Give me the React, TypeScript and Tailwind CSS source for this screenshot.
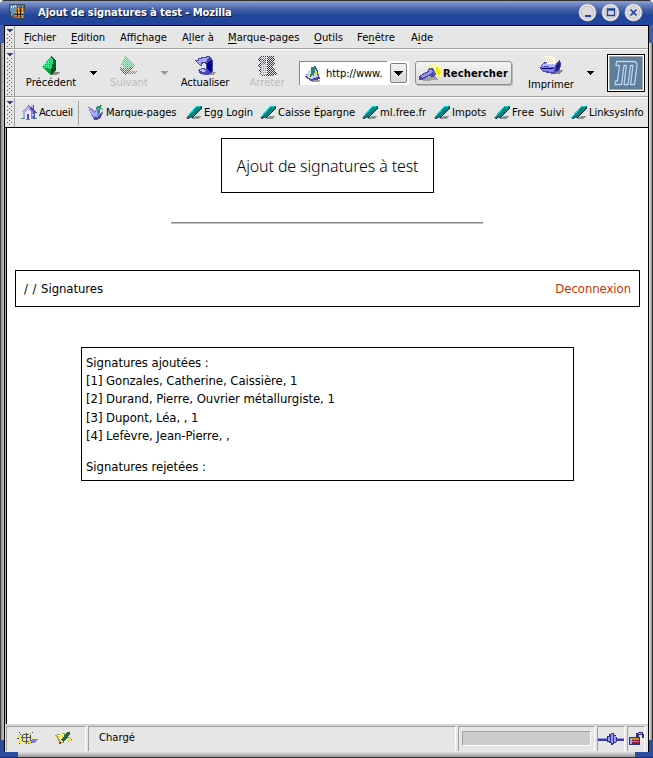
import React from "react";

function Gem() {
  return (
    <svg className="h-5 w-5 shrink-0" viewBox="0 0 20 20" shapeRendering="crispEdges">
      <defs>
        <pattern id="gemDither" width="2" height="2" patternUnits="userSpaceOnUse">
          <rect width="1" height="1" fill="#10a868" />
          <rect x="1" y="1" width="1" height="1" fill="#80ffb8" />
        </pattern>
      </defs>
      <path d="M8 16h11v1h-1v1h-2v1h-7z" fill="#888" />
      <path d="M10 0L1 11L10 13Z" fill="#28e078" />
      <path d="M9 2L2 11L9 12Z" fill="url(#gemDither)" />
      <path d="M10 0L15 4V14L10 19Z" fill="#006428" />
      <path d="M10 1L12 4L11 12H10Z" fill="#30d878" />
      <path d="M1 11L10 13V19Z" fill="#109848" />
      <path d="M10 13L14 12L11 18Z" fill="#003c18" />
    </svg>
  );
}

function FadedGem() {
  return (
    <svg className="h-5 w-5 shrink-0" viewBox="0 0 20 20" shapeRendering="crispEdges">
      <defs>
        <pattern id="fadeLight" width="2" height="2" patternUnits="userSpaceOnUse">
          <rect width="2" height="2" fill="#b0f0cc" />
          <rect width="1" height="1" fill="#30d880" />
          <rect x="1" y="1" width="1" height="1" fill="#50e8a0" />
        </pattern>
        <pattern id="fadeDark" width="2" height="2" patternUnits="userSpaceOnUse">
          <rect width="1" height="1" fill="#207050" />
          <rect x="1" y="1" width="1" height="1" fill="#309868" />
        </pattern>
        <pattern id="fadeShadow" width="2" height="2" patternUnits="userSpaceOnUse">
          <rect width="1" height="1" fill="#888" />
          <rect x="1" y="1" width="1" height="1" fill="#888" />
        </pattern>
      </defs>
      <path d="M8 15H20L16 18H8Z" fill="url(#fadeShadow)" />
      <path d="M6 0L17 10L6 13L2 8Z" fill="url(#fadeLight)" />
      <path d="M1 10L6 13L17 10L7 19L1 15Z" fill="url(#fadeDark)" />
    </svg>
  );
}

function Reload() {
  return (
    <svg className="h-5 w-[22px] shrink-0" viewBox="0 0 22 20" shapeRendering="crispEdges">
      <path d="M8 16h14l-2 3H8z" fill="#999" />
      <path d="M4 2L15 0L18 2L19 5V16L16 18L12 13V8L9 7L7 11L0 4H4Z" fill="#4848a8" />
      <path d="M5 3L15 1L12 6L7 6L7 9L2 5H5Z" fill="#a8a8f8" />
      <path d="M13 7L18 4V15L16 16L13 12Z" fill="#000090" />
      <path d="M4 14L8 12L13 13L17 17L14 19L6 18Z" fill="#4848b0" />
      <path d="M5 14L9 13L13 15L9 16Z" fill="#c0c0ff" />
    </svg>
  );
}

function Stop() {
  return (
    <svg className="h-5 w-5 shrink-0" viewBox="0 0 20 20" shapeRendering="crispEdges">
      <defs>
        <pattern id="stopDither" width="2" height="2" patternUnits="userSpaceOnUse">
          <rect width="1" height="1" fill="#303048" />
          <rect x="1" y="1" width="1" height="1" fill="#404060" />
        </pattern>
        <pattern id="stopPale" width="2" height="2" patternUnits="userSpaceOnUse">
          <rect width="2" height="2" fill="#e0e0ea" />
          <rect width="1" height="1" fill="#9090c8" />
        </pattern>
        <pattern id="stopRed" width="2" height="2" patternUnits="userSpaceOnUse">
          <rect width="1" height="1" fill="#e02040" />
          <rect x="1" y="1" width="1" height="1" fill="#f04050" />
        </pattern>
      </defs>
      <path d="M3 0H17L18 3L16 5L18 8L16 11L18 14L20 18L14 20H5L3 17L1 15L3 12L1 9L3 7L0 3Z" fill="url(#stopDither)" />
      <path d="M4 1h6v18H4z" fill="url(#stopPale)" />
      <path d="M5 3h4v5H5z" fill="url(#stopRed)" />
    </svg>
  );
}

function Printer() {
  return (
    <svg className="h-[18px] w-[23px] shrink-0" viewBox="0 0 23 18" shapeRendering="crispEdges">
      <path d="M14 14h9l-4 4h-7z" fill="#888" />
      <path d="M1 9L5 6L16 7L20 3L21 8L20 14L14 18L3 16L0 13Z" fill="#4848b0" />
      <path d="M2 9L6 7L16 8L15 11L2 10Z" fill="#b8b8ff" />
      <path d="M1 10L14 12V16L3 15Z" fill="#8080e8" />
      <path d="M5 0L14 0L16 8L7 8Z" fill="#fffbe0" />
      <path d="M6 1h1v1H6zM8 1h1v1H8zM10 1h1v1h-1zM12 1h1v1h-1zM7 3h1v1H7zM9 3h1v1H9zM11 3h1v1h-1zM8 5h1v1H8zM10 5h1v1h-1zM12 5h1v1h-1z" fill="#e8d498" />
      <path d="M2 12h11v1H2z" fill="#000070" />
      <path d="M16 9L20 6V12L16 15Z" fill="#202080" />
    </svg>
  );
}

function PageIcon() {
  return (
    <svg className="h-4 w-4 shrink-0" viewBox="0 0 16 16" shapeRendering="crispEdges">
      <path d="M5 14h11l-3 2H7z" fill="#999" />
      <path d="M4 4L12 2L15 13L6 15L0 11Z" fill="#4848b0" />
      <path d="M4 4L11 3L13 11L6 13L1 10Z" fill="#d0d0f8" />
      <path d="M2 9h3v2H2zM10 5h2v4h-2zM5 11h3v1H5z" fill="#e8e030" />
      <path d="M6 1L11 0L9 10L7 9L5 11L6 5Z" fill="#288858" />
    </svg>
  );
}

function Flashlight() {
  return (
    <svg className="h-[18px] w-[23px] shrink-0" viewBox="0 0 23 18" shapeRendering="crispEdges">
      <defs>
        <pattern id="beam" width="2" height="2" patternUnits="userSpaceOnUse">
          <rect width="2" height="2" fill="#fffcb0" />
          <rect width="1" height="1" fill="#f4f440" />
        </pattern>
      </defs>
      <path d="M9 5L11 0L22 1L23 12L16 15L13 12Z" fill="url(#beam)" />
      <path d="M17 3h2l3 5-2 3-3-2z" fill="#f4e800" />
      <path d="M2 15L12 12L17 12L19 16L5 17Z" fill="#a0a0a0" />
      <path d="M0 12L9 7L10 4L14 4L17 10L14 13L10 12L3 16L0 16Z" fill="#4848a8" />
      <path d="M2 12L10 8V6L12 5L14 8L11 10L3 14Z" fill="#9898f0" />
      <path d="M14 6L16 10L14 11Z" fill="#6060c0" />
    </svg>
  );
}

function Home() {
  return (
    <svg className="h-[15px] w-4 shrink-0" viewBox="0 0 16 15" shapeRendering="crispEdges">
      <path d="M0 13h5v1H0zM12 13h4v1h-4z" fill="#38a070" />
      <path d="M2 7L7 1L13 7V14H3V7Z" fill="#8888d8" />
      <path d="M0 7L7 0L9 3L4 8V13H2V7Z" fill="#a8a8ff" />
      <path d="M7 0L10 2V0h3v4l3 4h-2v6h-2V7Z" fill="#505098" />
      <path d="M4 7L7 4L10 7V14H4Z" fill="#e8e8ff" />
      <path d="M6 9h2v5H6z" fill="#5050a0" />
      <path d="M11 9h2v2h-2zM10 0h2v3h-1z" fill="#b8b8f8" />
      <path d="M5 14h4v1H5z" fill="#c86060" />
    </svg>
  );
}

function BookmarksIcon() {
  return (
    <svg className="h-4 w-4 shrink-0" viewBox="0 0 16 16" shapeRendering="crispEdges">
      <path d="M9 1L14 0L12 6L13 10L10 13L8 4Z" fill="#209060" />
      <path d="M0 2L3 3L6 6L9 3L11 2L10 8L15 7L13 12L8 14L4 12Z" fill="#8080e0" />
      <path d="M1 3L4 5L6 8L9 5V12L4 10Z" fill="#a8a8ff" />
      <path d="M11 10L15 8L12 14L7 15L4 13L10 12Z" fill="#5050a0" />
      <path d="M13 3h2v2h-2zM14 6h1v1h-1z" fill="#80c0c0" />
    </svg>
  );
}

function Bookmark() {
  return (
    <svg className="h-4 w-4 shrink-0" viewBox="0 0 16 16" shapeRendering="crispEdges">
      <path d="M5 14L10 11H16L12 14Z" fill="#909090" />
      <path d="M0 13L11 1L16 1V4L6 13L4 12L2 15Z" fill="#101818" />
      <path d="M0 13L11 1H14L16 1L15 4L5 13L3 12L1 14Z" fill="#008080" />
      <path d="M0 13L11 1H14" stroke="#00d8d8" fill="none" />
    </svg>
  );
}

function AppIcon() {
  return (
    <svg className="h-4 w-4 shrink-0" viewBox="0 0 16 16" shapeRendering="crispEdges">
      <path d="M0 0H16L15 15L2 14L0 9Z" fill="#404850" />
      <path d="M1 1H8V7L2 12Z" fill="#6898b8" />
      <path d="M2 2h1v2H2zM4 2h1v2H4zM6 1h1v2H6z" fill="#d0e8f0" />
      <path d="M7 4h8v10H4V9h3z" fill="#a86818" />
      <path d="M9 3h1v11H9zM13 3h1v11h-1zM6 8h9v1H6zM5 11h9v1H5z" fill="#e0a040" />
      <path d="M8 6h1v7H8zM11 5h1v8h-1zM5 10h9v1H5z" fill="#282020" />
      <path d="M8 1h7v2H8z" fill="#5878a0" />
    </svg>
  );
}

function WindowButton({ kind }: { kind: "min" | "max" | "close" }) {
  return (
    <svg className="h-[19px] w-[19px] shrink-0" viewBox="0 0 19 19">
      <circle cx="9.5" cy="9.5" r="9" fill="#b4b4ba" />
      <circle cx="9.5" cy="9.5" r="8" fill="#f8f8f8" />
      <circle cx="9.5" cy="9.5" r="6.5" fill="#dadada" stroke="#bbb" />
      {kind === "min" && <path d="M7 12h6v2H7z" fill="#2040a0" />}
      {kind === "max" && <path d="M6.500 6v6.500h7v-6.500zM6 7h8" fill="none" stroke="#2040a0" strokeWidth="1.300" />}
      {kind === "close" && <path d="M6.500 6.500l6 6M12.500 6.500l-6 6" fill="none" stroke="#2040a0" strokeWidth="1.700" />}
    </svg>
  );
}

function MozillaLogo() {
  return (
    <div className="h-[38px] w-[38px] shrink-0 border border-black bg-white p-px">
      <div className="flex h-full w-full items-center justify-center border border-[#a0a8b0] bg-[#607c98]">
        <svg className="h-[26px] w-[26px]" viewBox="0 0 26 26" fill="none">
          <path
            d="M3.500 1.500H20Q24.500 1.500 24 6L21.500 24.500H17.500L20 5.500H17.500L15 24.500H11L13.500 5.500H11L8.500 24.500H2L2.500 21H4.500L6.500 5.500H3Z"
            stroke="#b4d8f4"
            strokeWidth="1.300"
            strokeLinejoin="round"
          />
        </svg>
      </div>
    </div>
  );
}

function Grip({ rows }: { rows: number }) {
  return (
    <div className="flex w-[10px] shrink-0 flex-col items-center gap-[2px] self-stretch border-r border-[#a0a0a0] pt-[3px]">
      <svg className="h-[3px] w-[6px] shrink-0" viewBox="0 0 6 3" shapeRendering="crispEdges">
        <path d="M0 0h6v1H0zM1 1h4v1H1zM2 2h2v1H2z" fill="#404090" />
      </svg>
      <svg className="w-[5px] shrink-0" width="5" height={rows * 4} shapeRendering="crispEdges">
        {Array.from({ length: rows }, (_, i) => (
          <path key={i} d={`M0 ${i * 4}h1v1h-1zM4 ${i * 4}h1v1h-1zM2 ${i * 4 + 2}h1v1h-1z`} fill="#505098" />
        ))}
      </svg>
    </div>
  );
}

function Caret({ dim = false }: { dim?: boolean }) {
  return (
    <svg className="h-1 w-[7px] shrink-0" viewBox="0 0 7 4" shapeRendering="crispEdges">
      <path d="M0 0h7v1H0zM1 1h5v1H1zM2 2h3v1H2zM3 3h1v1H3z" fill={dim ? "#999" : "#000"} />
    </svg>
  );
}

function Menu({ pre = "", hot, post, className }: { pre?: string; hot: string; post: string; className: string }) {
  return (
    <div className={`shrink-0 pt-[2px] ${className}`}>
      {pre}
      <span className="underline underline-offset-2">{hot}</span>
      {post}
    </div>
  );
}

function ToolButton({ label, className, children }: { label: string; className: string; children: React.ReactNode }) {
  return (
    <div className={`flex shrink-0 flex-col items-center ${className}`}>
      {children}
      <span className="leading-3">{label}</span>
    </div>
  );
}

function Link({ label, className, children }: { label: string; className: string; children?: React.ReactNode }) {
  return (
    <div className={`flex shrink-0 items-center gap-[2px] ${className}`}>
      {children}
      <span>{label}</span>
    </div>
  );
}

const signatures = [
  "[1] Gonzales, Catherine, Caissière, 1",
  "[2] Durand, Pierre, Ouvrier métallurgiste, 1",
  "[3] Dupont, Léa, , 1",
  "[4] Lefèvre, Jean-Pierre, ,",
];

export default function App() {
  return (
    <div className="flex h-[758px] w-[653px] flex-col overflow-hidden whitespace-nowrap rounded-t-[5px] bg-[#404040] font-['DejaVu_Sans',sans-serif] text-[10px] leading-3 text-black">
      <header className="flex h-[25px] shrink-0 items-center border-t border-[#303030] bg-linear-to-b from-[#8ba0d4] via-[#4460a8] via-35% to-[#20459a] to-60% pl-[9px] pr-[10px] pb-[2px]">
        <AppIcon />
        <h1 className="ml-[13px] pt-px text-[10px] font-bold tracking-[-0.11px] text-white [text-shadow:1px_1px_0_#101830]">
          Ajout de signatures à test - Mozilla
        </h1>
        <div className="ml-auto flex gap-1">
          <WindowButton kind="min" />
          <WindowButton kind="max" />
          <WindowButton kind="close" />
        </div>
      </header>

      <div className="flex h-[727px] shrink-0">
        <div className="flex w-[5px] shrink-0 flex-col">
          <div className="h-[18px] border-r border-black bg-[#3c5cac]" />
          <div className="flex-1 border-x border-l-[#404040] border-r-black bg-linear-to-r from-[#888] to-[#ccc]" />
          <div className="h-[12px] border-r border-black bg-[#2c4c9c]" />
        </div>

        <div className="flex w-[643px] shrink-0 flex-col border-t border-black bg-[#e6e6e6]">
          <nav className="flex h-[23px] items-center border-b border-[#a0a0a0]">
            <Grip rows={4} />
            <Menu className="ml-[9px] w-[47px] tracking-[-0.1px]" hot="F" post="ichier" />
            <Menu className="w-[49px] tracking-[-0.1px]" hot="E" post="dition" />
            <Menu className="w-[62px]" pre="Affi" hot="c" post="hage" />
            <Menu className="w-[46px]" pre="A" hot="l" post="ler à" />
            <Menu className="w-[86px]" hot="M" post="arque-pages" />
            <Menu className="w-[43px]" hot="O" post="utils" />
            <Menu className="w-[54px]" pre="Fe" hot="n" post="être" />
            <Menu className="w-[30px]" pre="A" hot="i" post="de" />
          </nav>

          <div className="flex h-[48px] items-center border-t border-b border-t-white border-b-[#a0a0a0]">
            <Grip rows={10} />
            <ToolButton label="Précédent" className="ml-[9px] w-[54px] gap-px pb-px">
              <Gem />
            </ToolButton>
            <div className="ml-[12px]"><Caret /></div>
            <ToolButton label="Suivant" className="ml-[7px] w-[50px] gap-px pb-px text-[#bcbcbc]">
              <FadedGem />
            </ToolButton>
            <div className="ml-[7px]"><Caret dim /></div>
            <ToolButton label="Actualiser" className="ml-[9px] w-[56px] gap-px pb-px tracking-[-0.1px]">
              <Reload />
            </ToolButton>
            <ToolButton label="Arrêter" className="ml-[14px] w-[40px] gap-px pb-px text-[#bcbcbc]">
              <Stop />
            </ToolButton>
            <div className="ml-[12px] flex h-[24px] w-[110px] shrink-0 items-center bg-white">
              <div className="flex h-full w-[88px] items-center border-t border-l border-[#888] pl-[5px]">
                <PageIcon />
                <span className="ml-[5px] tracking-[-0.1px]">http://www.</span>
              </div>
              <div className="ml-[3px] flex h-5 w-[17px] items-center justify-center rounded-[2px] border border-[#808080] bg-linear-to-b from-[#f4f4f4] to-[#d8d8d8]">
                <svg className="h-[5px] w-[9px]" viewBox="0 0 9 5" shapeRendering="crispEdges">
                  <path d="M0 0h9v1H0zM1 1h7v1H1zM2 2h5v1H2zM3 3h3v1H3zM4 4h1v1H4z" />
                </svg>
              </div>
            </div>
            <div className="ml-[6px] flex h-[24px] w-[97px] shrink-0 items-center rounded-[3px] border border-[#909090] bg-linear-to-b from-[#f4f4f4] to-[#d8d8d8] pl-[3px] font-bold shadow-[1px_1px_0_#b8b8b8]">
              <Flashlight />
              <span className="ml-px pt-px tracking-[0.1px]">Rechercher</span>
            </div>
            <ToolButton label="Imprimer" className="ml-[14px] w-[50px] gap-[5px]">
              <Printer />
            </ToolButton>
            <div className="ml-[11px]"><Caret /></div>
            <div className="ml-[13px]"><MozillaLogo /></div>
          </div>

          <div className="flex h-[30px] items-center border-t border-white">
            <Grip rows={5} />
            <Link label="Accueil" className="ml-[6px] w-[57px] tracking-[-0.3px]"><Home /></Link>
            <div className="h-6 w-px shrink-0 bg-[#a0a0a0]" />
            <Link label="Marque-pages" className="ml-[9px] w-[98px] tracking-[-0.08px]"><BookmarksIcon /></Link>
            <Link label="Egg Login" className="w-[74px]"><Bookmark /></Link>
            <Link label="Caisse Épargne" className="w-[102px]"><Bookmark /></Link>
            <Link label="ml.free.fr" className="w-[72px]"><Bookmark /></Link>
            <Link label="Impots" className="w-[60px]"><Bookmark /></Link>
            <Link label="Free" className="w-[46px] tracking-[0.3px]"><Bookmark /></Link>
            <Link label="Suivi" className="w-[31px]" />
            <Link label="LinksysInfo" className="w-[76px] tracking-[-0.1px]"><Bookmark /></Link>
          </div>

          <main className="flex h-[597px] shrink-0 flex-col border-t border-black bg-white bg-[linear-gradient(to_right,#b0b0b0_1px,#000_1px,#000_2px,transparent_2px)] pl-[2px] font-['DejaVu_Sans_Condensed','DejaVu_Sans',sans-serif] text-[13px] tracking-[-0.06px]">
            <h2 className="mt-[10px] ml-[214px] flex h-[55px] w-[213px] items-center justify-center border border-black pt-px font-['Noto_Sans',sans-serif] text-[16px] font-light tracking-[-0.12px]">
              Ajout de signatures à test
            </h2>
            <div className="mt-[29px] ml-[164px] h-[2px] w-[312px] border-t border-[#888] bg-[#c0c0c0]" />
            <div className="mt-[46px] ml-[8px] flex h-[37px] w-[625px] items-center justify-between border border-black px-2">
              <span className="[word-spacing:1px]">/ / Signatures</span>
              <span className="text-[#cc3300]">Deconnexion</span>
            </div>
            <section className="mt-[40px] ml-[74px] h-[134px] w-[493px] border border-black pt-[6px] pl-[4px] leading-[18.2px]">
              <p>Signatures ajoutées :</p>
              {signatures.map((line) => (
                <p key={line}>{line}</p>
              ))}
              <p className="mt-[13px]">Signatures rejetées :</p>
            </section>
          </main>

          <footer className="flex flex-1 gap-[2px] border-t-2 border-[#d4d4d4] pb-px pl-px">
            <div className="flex w-[80px] items-center gap-[15px] border-t border-l border-[#a0a0a0] border-r border-r-white pb-[2px] pl-[10px]">
              <svg className="h-[14px] w-[22px]" viewBox="0 0 22 14" shapeRendering="crispEdges">
                <path d="M11 8h10l-2 3-5 2h-3z" fill="#8080c8" />
                <path d="M2 1l4 2 3-3 2 3 5-2-2 4 3 2-3 2 1 4-4-1-3 2-2-3-5 1 2-4-3-2 3-2z" fill="#f0e840" />
                <path d="M6 3h6v1H6zM4 6h10v1H4zM6 10h6v1H6zM5 4h1v6H5zM9 2h1v11H9zM13 4h1v6h-1z" fill="#505098" />
                <path d="M7 4h1v2H7zM11 7h1v2h-1zM7 8h1v1H7zM11 4h1v1h-1z" fill="#fff" />
                <path d="M2 1h1v1H2zM15 1h1v1h-1zM2 12h1v1H2zM0 7h2v1H0zM3 3h1v1H3zM14 11h1v1h-1z" fill="#404090" />
              </svg>
              <svg className="h-[14px] w-[20px]" viewBox="0 0 20 14" shapeRendering="crispEdges">
                <path d="M1 4l9-2 9 7-5 2-8 1z" fill="#a8a050" />
                <path d="M3 4l6-1 9 6-5 2H7z" fill="#fff8a0" />
                <path d="M4 5h2v2H4zM7 4h2v2H7zM14 8h2v2h-2z" fill="#f0e020" />
                <path d="M13 1h3v2l-3 5-4 3-2-2z" fill="#206850" />
                <path d="M5 11h2v2H5z" fill="#c02040" />
              </svg>
            </div>
            <div className="flex w-[368px] items-center border-t border-l border-[#a0a0a0] border-r border-r-white pb-[2px] pl-[10px]">Chargé</div>
            <div className="flex w-[137px] items-center border-t border-l border-[#a0a0a0] border-r border-r-white pb-px pl-[3px]">
              <div className="h-[15px] w-[129px] border border-t-[#a0a0a0] border-l-[#a0a0a0] border-r-white border-b-white bg-[#cbcdcb]" />
            </div>
            <div className="flex w-[28px] items-center border-t border-l border-[#a0a0a0] border-r border-r-white pb-px">
              <svg className="h-3 w-[26px]" viewBox="0 0 26 12" shapeRendering="crispEdges">
                <path d="M0 5h26v3H0z" fill="#404090" />
                <path d="M0 5h26v1H0z" fill="#9090e8" />
                <path d="M9 3h2V1h2V0h3v2h2v2h1v5h-1v1h-2v1h-1v1h-2v-2h-2V9H9z" fill="#303080" />
                <path d="M10 4h2v4h-2zM13 1h2v9h-2zM16 3h2v6h-2z" fill="#9898ff" />
              </svg>
            </div>
            <div className="flex w-[18px] items-center border-t border-l border-[#a0a0a0] border-r border-r-white pb-[2px]">
              <svg className="ml-px h-[13px] w-[15px]" viewBox="0 0 15 13" shapeRendering="crispEdges">
                <path d="M7 4V1h2V0h5v2h1v4h-2V3h-3v3H8z" fill="#303080" />
                <path d="M9 1h4v1H9z" fill="#a0a0ff" />
                <path d="M0 5h11v8H0z" fill="#303080" />
                <path d="M1 6h2v6H1z" fill="#a0a0ff" />
                <path d="M3 6h7v2H3zM3 9h7v1H3z" fill="#c09020" />
                <path d="M3 8h7v1H3zM3 10h7v1H3z" fill="#902040" />
              </svg>
            </div>
          </footer>
        </div>

        <div className="flex w-[5px] shrink-0 flex-col">
          <div className="h-[18px] border-l border-black bg-[#3c5cac]" />
          <div className="flex-1 border-x border-l-black border-r-[#303030] bg-linear-to-r from-[#eee] to-[#888]" />
          <div className="h-[12px] border-l border-black bg-[#2c4c9c]" />
        </div>
      </div>

      <div className="flex h-[6px] shrink-0 border-b border-[#303030]">
        <div className="w-[18px] bg-[#2c4ca0]" />
        <div className="flex-1 bg-linear-to-b from-[#e0e0e0] to-[#999]" />
        <div className="w-[18px] bg-[#2c4ca0]" />
      </div>
    </div>
  );
}
